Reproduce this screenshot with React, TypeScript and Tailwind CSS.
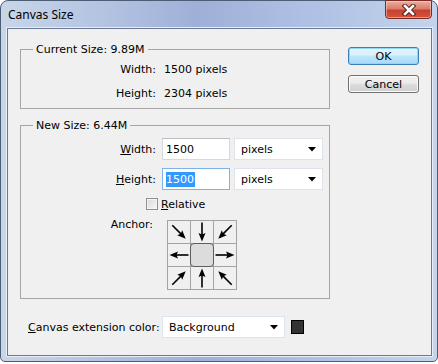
import React from 'react';

const Arrow = ({ angle }: { angle: number }) => (
  <svg width="22" height="22" viewBox="0 0 22 22">
    <g transform={`rotate(${angle} 11 11)`}>
      <line x1="1.5" y1="11" x2="14" y2="11" stroke="#000" strokeWidth="1.6" />
      <polygon points="12,7.5 20.5,11 12,14.5 13.5,11" fill="#000" />
    </g>
  </svg>
);

const Caret = () => (
  <svg width="8" height="5" viewBox="0 0 8 5" className="shrink-0">
    <polygon points="0,0 8,0 4,4.5" fill="#000" />
  </svg>
);

const UnitSelect = ({ value, w }: { value: string; w: string }) => (
  <div className={`${w} h-[22px] bg-white border border-[#dde3ea] flex items-center justify-between pl-[6px] pr-[6px]`}>
    <span>{value}</span>
    <Caret />
  </div>
);

// arrows point in toward the middle on the top and bottom rows
const anchorAngles = [45, 90, 135, 180, null, 0, -45, -90, -135];

export default function App() {
  return (
    <div className="w-[438px] h-[364px] bg-white font-['DejaVu_Sans',sans-serif] text-[11px] text-black leading-[13px]">
      <div className="h-[362px] flex flex-col rounded-t-[8px] rounded-b-[5px] border border-[#4d5d75] pl-[6px] pr-[5px] pb-[5px] bg-[linear-gradient(90deg,#c8d6e9_0%,#b2c2e0_25%,#9fb0d8_45%,#aec0e3_70%,#c3d4ec_100%)]">
        {/* title bar */}
        <div className="h-[27px] flex items-start justify-between shrink-0">
          <span className="pl-[1px] pt-[6px] font-['Noto_Sans',sans-serif] text-[12px] leading-[16px] text-black">
            Canvas Size
          </span>
          <div className="w-[47px] h-[19px] -mt-px flex items-center justify-center rounded-b-[4px] border border-[#7d2b22] bg-[linear-gradient(180deg,#eab0a4_0%,#dc7d6c_45%,#c8412d_55%,#d3553f_100%)] shadow-[inset_0_0_0_1px_rgba(255,220,210,0.5)]">
            <svg width="14" height="12" viewBox="0 0 14 12">
              <path d="M3 2 L11 10 M11 2 L3 10" stroke="#4a1c17" strokeWidth="4.5" strokeLinecap="square" />
              <path d="M3 2 L11 10 M11 2 L3 10" stroke="#fff" strokeWidth="2.6" strokeLinecap="square" />
            </svg>
          </div>
        </div>

        {/* client area */}
        <div className="flex-1 flex flex-col border border-[#6a7a92] bg-[#f0f0f0] pt-[14px] pl-[12px] shadow-[0_0_0_1px_#e8eef7]">
          <div className="flex">
            <div className="w-[310px] flex flex-col">
              <fieldset className="h-[66px] border border-[#a5a5a5]">
                <legend className="ml-[12px] px-[3px] leading-[13px]">Current Size: 9.89M</legend>
                <div className="flex items-center h-[16px] mt-[5px]">
                  <span className="w-[135px] text-right">Width:</span>
                  <span className="ml-[8px]">1500 pixels</span>
                </div>
                <div className="flex items-center h-[16px] mt-[8px]">
                  <span className="w-[135px] text-right">Height:</span>
                  <span className="ml-[8px]">2304 pixels</span>
                </div>
              </fieldset>

              <fieldset className="h-[180px] mt-[10px] border border-[#a5a5a5]">
                <legend className="ml-[12px] px-[3px] leading-[13px]">New Size: 6.44M</legend>
                <div className="flex items-center mt-[6px]">
                  <span className="w-[135px] text-right">
                    <span className="underline">W</span>idth:
                  </span>
                  <div className="ml-[6px] w-[68px] h-[22px] bg-white border border-[#d5d9df] border-t-[#b8bcc3] flex items-center pl-[3px]">
                    1500
                  </div>
                  <div className="ml-[4px]">
                    <UnitSelect value="pixels" w="w-[89px]" />
                  </div>
                </div>
                <div className="flex items-center mt-[8px]">
                  <span className="w-[135px] text-right">
                    <span className="underline">H</span>eight:
                  </span>
                  <div className="ml-[6px] w-[68px] h-[22px] bg-white border border-[#7fb3e6] flex items-center pl-[3px]">
                    <span className="bg-[#3399ff] text-white leading-[15px] pr-px">1500</span>
                  </div>
                  <div className="ml-[4px]">
                    <UnitSelect value="pixels" w="w-[89px]" />
                  </div>
                </div>
                <div className="flex items-center h-[12px] mt-[8px] pl-[125px]">
                  <div className="w-[12px] h-[12px] border border-[#8e8f8f] bg-[linear-gradient(135deg,#d8d8d8,#f8f8f8)] shadow-[inset_0_0_0_1px_#f4f4f4]" />
                  <span className="ml-[3px]">
                    <span className="underline">R</span>elative
                  </span>
                </div>
                <div className="flex items-start mt-[10px]">
                  <span className="w-[132px] text-right -mt-[2px]">Anchor:</span>
                  <div className="ml-[14px] grid grid-cols-[22px_22px_22px] grid-rows-[22px_22px_22px] gap-px p-px bg-[#a3a3a3]">
                    {anchorAngles.map((a, i) =>
                      a === null ? (
                        <div key={i} className="bg-[#f0f0f0] flex">
                          <div className="-m-px flex-1 rounded-[4px] border border-[#5e5e5e] bg-[#dcdcdc]" />
                        </div>
                      ) : (
                        <div key={i} className="bg-[#f0f0f0]">
                          <Arrow angle={a} />
                        </div>
                      )
                    )}
                  </div>
                </div>
              </fieldset>
            </div>

            <div className="ml-[18px] mt-[4px] flex flex-col">
              <button className="w-[71px] h-[18px] rounded-[3px] border border-[#3c7fb1] bg-[linear-gradient(180deg,#e5f5fd_0%,#d9f0fc_45%,#bee6fd_50%,#a7d9f5_100%)] shadow-[inset_0_0_0_1px_#8fd6fa] flex items-center justify-center leading-[13px]">
                OK
              </button>
              <button className="mt-[10px] w-[71px] h-[18px] rounded-[3px] border border-[#707070] bg-[linear-gradient(180deg,#f2f2f2_0%,#ebebeb_45%,#dddddd_50%,#cfcfcf_100%)] shadow-[inset_0_0_0_1px_#fbfbfb] flex items-center justify-center leading-[13px]">
                Cancel
              </button>
            </div>
          </div>

          <div className="flex items-center mt-[17px] pl-[8px]">
            <span className="w-[134px]">
              <span className="underline">C</span>anvas extension color:
            </span>
            <UnitSelect value="Background" w="w-[123px]" />
            <div className="ml-[6px] w-[13px] h-[14px] border border-black bg-[#333333]" />
          </div>
        </div>
      </div>
    </div>
  );
}
